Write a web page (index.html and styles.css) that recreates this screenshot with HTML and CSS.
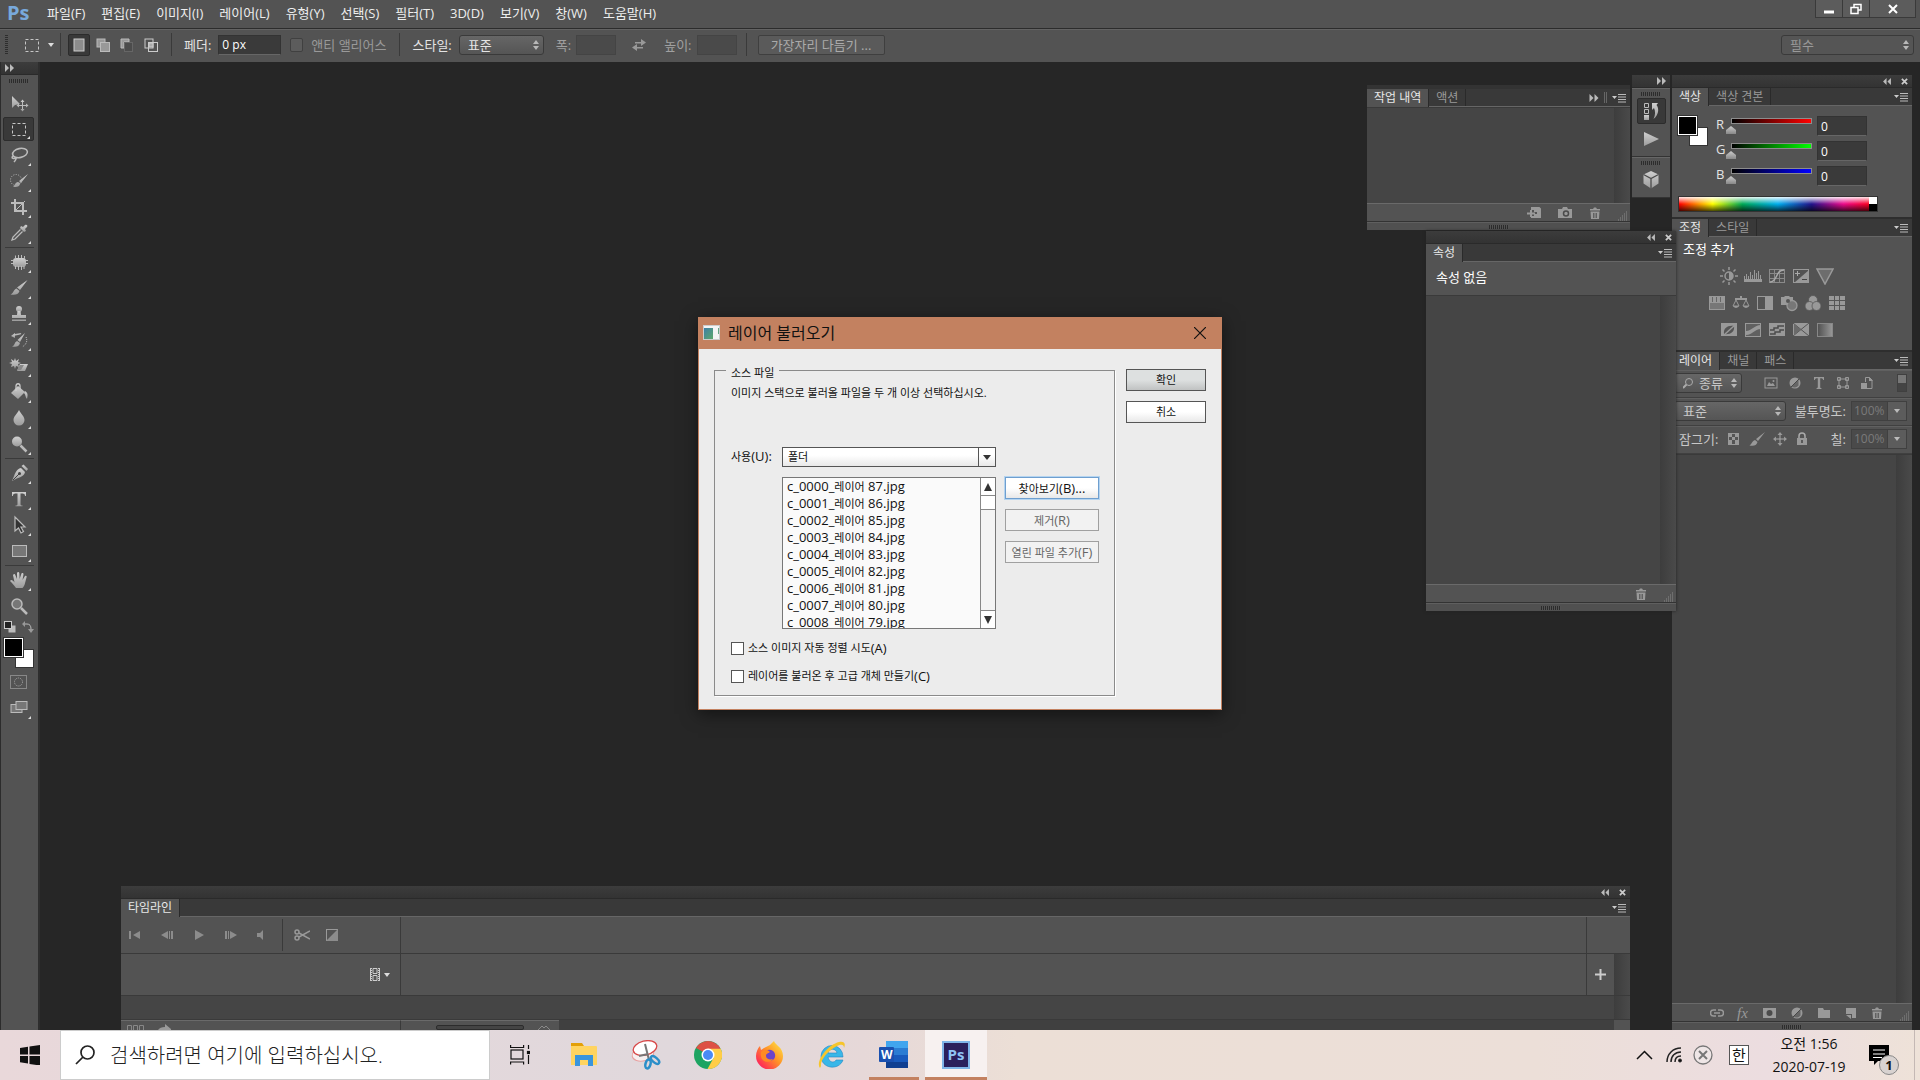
FILE: index.html
```html
<!DOCTYPE html>
<html lang="ko">
<head>
    <meta charset="UTF-8">
    <meta name="viewport" content="width=device-width, initial-scale=1.0">
    <title>Photoshop</title>
    <link rel="stylesheet" href="styles.css">
</head>
<body>
    <!-- 공용 아이콘 -->
    <svg class="sprite" aria-hidden="true">
        <defs>
            <linearGradient id="metal" x1="0" y1="0" x2="0" y2="1">
                <stop offset="0" stop-color="#d0d0d0"/><stop offset="1" stop-color="#9c9c9c"/>
            </linearGradient>
        </defs>
        <symbol id="i-menu" viewBox="0 0 14 10"><path d="M0 3h5L2.500 6z" fill="#ccc"/><path d="M6 1.500h8M6 4h8M6 6.500h8M6 9h8" stroke="#bbb"/></symbol>
        <symbol id="i-next" viewBox="0 0 9 8"><path d="M0 0l4 4-4 4zM5 0l4 4-4 4z"/></symbol>
        <symbol id="i-prev" viewBox="0 0 9 8"><path d="M4 0L0 4l4 4zM9 0L5 4l4 4z"/></symbol>
        <symbol id="i-x" viewBox="0 0 8 8"><path d="M1 1l6 6M7 1L1 7" stroke="#ccc" stroke-width="2"/></symbol>
        <symbol id="i-down" viewBox="0 0 6 4"><path d="M0 0h6L3 4z"/></symbol>
        <symbol id="i-updown" viewBox="0 0 6 10"><path d="M0 4h6L3 0zM0 6h6L3 10z"/></symbol>
        <symbol id="i-trash" viewBox="0 0 12 12"><path d="M1 2h3l1-1.500h2L8 2h3v1.500H1zM1.500 4.500h9L10 12H2z"/><path d="M4.500 6v5M6 6v5M7.500 6v5" stroke="#535353" stroke-width=".8"/></symbol>
        <symbol id="i-corner" viewBox="0 0 10 10"><path d="M8 1h1M6 3h1M8 3h1M4 5h1M6 5h1M8 5h1M2 7h1M4 7h1M6 7h1M8 7h1M0 9h1M2 9h1M4 9h1M6 9h1M8 9h1" stroke="#8a8a8a"/></symbol>
        <symbol id="i-marquee" viewBox="0 0 20 20"><rect x="3.500" y="4.500" width="13" height="12" fill="none" stroke="#c6c6c6" stroke-dasharray="3 2"/></symbol>
        <symbol id="i-half" viewBox="0 0 14 14"><circle cx="7" cy="7" r="5.500"/><path d="M3.500 10.500l7-7v6a5 5 0 0 1-7 1z" fill="#666"/><path d="M3 11l8-8" stroke="#484848"/></symbol>
    </svg>

    <header class="menubar">
        <span class="ps-logo">Ps</span>
        <nav class="menus">
            <a href="#">파일(F)</a>
            <a href="#">편집(E)</a>
            <a href="#">이미지(I)</a>
            <a href="#">레이어(L)</a>
            <a href="#">유형(Y)</a>
            <a href="#">선택(S)</a>
            <a href="#">필터(T)</a>
            <a href="#">3D(D)</a>
            <a href="#">보기(V)</a>
            <a href="#">창(W)</a>
            <a href="#">도움말(H)</a>
        </nav>
        <div class="window-buttons">
            <button aria-label="최소화"><svg width="12" height="12"><path d="M1 9h10" stroke="#fff" stroke-width="3"/></svg></button>
            <button aria-label="복원"><svg width="12" height="12" fill="none" stroke="#fff" stroke-width="1.500"><path d="M4 4V1.500h7V7H8"/><rect x="1" y="4.500" width="7" height="6"/></svg></button>
            <button class="wide" aria-label="닫기"><svg width="12" height="12"><path d="M2 2l8 8M10 2l-8 8" stroke="#fff" stroke-width="2"/></svg></button>
        </div>
    </header>

    <div class="options">
        <span class="grip-v"></span>
        <button class="opt-tool" aria-label="선택 윤곽"><svg width="20" height="20"><use href="#i-marquee"/></svg></button>
        <svg class="opt-arrow" width="6" height="4" fill="#ddd"><use href="#i-down"/></svg>
        <span class="sep"></span>
        <div class="modes">
            <button class="active" aria-label="새 선택"><svg width="14" height="14"><rect x="2" y="1" width="10" height="12" fill="#8c8c8c" stroke="#ccc"/></svg></button>
            <button aria-label="추가"><svg width="14" height="14"><rect x="1" y="1" width="8" height="8" fill="#999" stroke="#bbb"/><rect x="4.500" y="4.500" width="9" height="9" fill="#999" stroke="#bbb"/></svg></button>
            <button aria-label="빼기"><svg width="14" height="14"><path d="M1 1h8v3H4v6H1z" fill="#999" stroke="#bbb"/><rect x="4.500" y="4.500" width="8" height="9" fill="#4c4c4c" stroke="#666"/></svg></button>
            <button aria-label="교차"><svg width="14" height="14" fill="none" stroke="#ccc"><rect x="1" y="1" width="8" height="9"/><rect x="4.500" y="4.500" width="9" height="9"/><rect x="5" y="5" width="4" height="4" fill="#aaa"/></svg></button>
        </div>
        <span class="sep"></span>
        <label class="opt-label" for="feather">페더:</label>
        <input class="field feather" id="feather" type="text" value="0 px">
        <label class="anti"><input type="checkbox" disabled>앤티 앨리어스</label>
        <span class="sep"></span>
        <label class="opt-label" for="style">스타일:</label>
        <span class="drop style-drop">
            <select id="style"><option>표준</option></select>
            <svg width="6" height="10"><use href="#i-updown"/></svg>
        </span>
        <label class="opt-label dim" for="w">폭:</label>
        <input class="field small" id="w" type="text" disabled>
        <svg class="swap" width="16" height="14" fill="#999"><path d="M4 4h6V1l5 3.500L10 8V5.500H4zM12 9H6V6L1 9.500 6 13v-2.500h6z"/></svg>
        <label class="opt-label dim h-label" for="h">높이:</label>
        <input class="field small" id="h" type="text" disabled>
        <span class="sep"></span>
        <button class="refine" disabled>가장자리 다듬기 ...</button>
        <span class="drop workspace-drop">
            <select aria-label="작업 영역" disabled><option>필수</option></select>
            <svg width="6" height="10"><use href="#i-updown"/></svg>
        </span>
    </div>

    <main class="workspace">
        <aside class="tools">
            <div class="panel-head left"><svg width="9" height="8" fill="#bbb"><use href="#i-next"/></svg></div>
            <div class="grip-row"><span class="grip"></span></div>
            <button class="tool no-more" aria-label="이동"><svg width="20" height="20"><path d="M3 3v12l3-3 5-1z"/><path d="M13.500 7v11M8 12.500h11" stroke="#bbb"/><path d="M11.500 9l2-2.500 2 2.500zM11.500 16l2 2.500 2-2.500zM10 10.500l-2.500 2 2.500 2zM17 10.500l2.500 2-2.500 2z"/></svg></button>
            <button class="tool active" aria-label="사각형 선택 윤곽"><svg width="20" height="20"><use href="#i-marquee"/></svg></button>
            <button class="tool" aria-label="올가미"><svg width="20" height="20" fill="none" stroke="#bbb" stroke-width="1.600"><ellipse cx="11" cy="8" rx="7.500" ry="4.500" transform="rotate(-12 11 8)"/><path d="M4 11c-2 2 0 3 2 2s1 2-1 4"/></svg></button>
            <button class="tool" aria-label="빠른 선택"><svg width="20" height="20"><circle cx="7" cy="9" r="5.500" fill="none" stroke="#bbb" stroke-dasharray="1 1.500"/><path d="M19 3l-7 9-2-2zM11 12c0 4-3 4-7 4 2-1 2-5 5-5z"/></svg></button>
            <button class="tool" aria-label="자르기"><svg width="20" height="20" fill="none" stroke="#bbb" stroke-width="2"><path d="M6 2v12h12M2 6h12v12"/><path d="M7 13l9-9" stroke-width="1"/></svg></button>
            <button class="tool" aria-label="스포이드"><svg width="20" height="20"><path d="M12 3l2 1 2-2c2-1 3 1 2 2l-2 2 1 2-2 1-4-4z"/><path d="M11.500 6.500L4 14l-1 3 3-1 7.500-7.500" fill="none" stroke="#bbb" stroke-width="1.300"/></svg></button>
            <span class="tool-sep"></span>
            <button class="tool" aria-label="복구 브러시"><svg width="20" height="20"><rect x="4" y="6" width="13" height="9" rx="3"/><path d="M6.500 3.500v3M9.500 3v3M12.500 3v3M15.500 4v3M6.500 14v3M9.500 14v4M12.500 14v4M15 14v3M2 8.500h3M2 11.500h3M16 8.500h3M16 11.500h3" stroke="#bbb"/></svg></button>
            <button class="tool" aria-label="브러시"><svg width="20" height="20"><path d="M18.500 2L11 12l-3-2.500zM7.500 10.500l3 2.500c-1 4-5 4-9 3.500 3-1 3-5 6-6z"/></svg></button>
            <button class="tool" aria-label="복제 도장"><svg width="20" height="20"><circle cx="10" cy="5" r="3"/><path d="M8.500 7h3l.5 4h5v3H3v-3h5zM3 15.500h14V17H3z"/></svg></button>
            <button class="tool" aria-label="작업 내역 브러시"><svg width="20" height="20"><path d="M16 3l-5 9-2.500-2zM8 11l3 2c-1 4-4 4-8 3.500 3-1 2-4 5-5.500z"/><path d="M4 6c3-3 6-1 8-2.500" stroke="#bbb" stroke-width="1.500" fill="none"/><path d="M2 6l4-3v5z"/><path d="M17 7c2 4 0 8-4 10" fill="none" stroke="#bbb" stroke-dasharray="1 1"/></svg></button>
            <button class="tool" aria-label="지우개"><svg width="20" height="20"><path d="M6 2l1 3 3-2-1 3 3 1-3 1 1 3-3-1-1 3-1-3-3 1 1-3-3-1 3-1-1-3 3 2z"/><path d="M11 8h8l-3 7H8z"/><path d="M11 9l-3 5h4l3-5z" fill="#888"/></svg></button>
            <button class="tool" aria-label="페인트 통"><svg width="20" height="20"><path d="M9 4l7 6-7 7-7-6z"/><path d="M7 9V4c0-3 4-3 4 0v3" fill="none" stroke="#ccc" stroke-width="1.300"/><path d="M16 9c3 2 3 4 2 8-2-2-1-4-3-6z"/></svg></button>
            <button class="tool" aria-label="흐림 효과"><svg width="20" height="20"><path d="M10 2c2 4 5.500 6.500 5.500 10a5.500 5.500 0 0 1-11 0C4.500 8.500 8 6 10 2z"/></svg></button>
            <button class="tool" aria-label="닷지"><svg width="20" height="20"><circle cx="8" cy="7.500" r="5"/><path d="M11.500 11.500l6 6" stroke="#bbb" stroke-width="2.500"/></svg></button>
            <span class="tool-sep"></span>
            <button class="tool" aria-label="펜"><svg width="20" height="20"><path d="M12 5l4 4c-1 5-6 5-13 9 3-7 4-12 9-13z"/><path d="M12.500 3l2-1.500 4.500 4.500-1.500 2z"/><path d="M4 17l6-6" stroke="#444"/><circle cx="10.500" cy="10.500" r="1.500" fill="#444"/></svg></button>
            <button class="tool" aria-label="문자"><svg width="20" height="20"><path d="M3 3h14v4h-1c0-2-1-2.500-4.500-2.500V15c0 1 .5 1.500 2 1.500v.8h-7v-.8c1.500 0 2-.5 2-1.500V4.500C5 4.500 4 5 4 7H3z"/></svg></button>
            <button class="tool" aria-label="패스 선택"><svg width="20" height="20"><path d="M6 2v14l3.500-3 2.500 5 2.500-1.500L12 12h4z" fill="#333" stroke="#bbb" stroke-width="1.200"/></svg></button>
            <button class="tool" aria-label="사각형"><svg width="20" height="20"><rect x="3.500" y="4.500" width="14" height="11" fill="#777" stroke="#bbb"/></svg></button>
            <span class="tool-sep"></span>
            <button class="tool" aria-label="손"><svg width="20" height="20"><path d="M7 18c-2-3-4-5-6-7 1-2 3-1 4.500 1.500L4 5c1-1.500 2-1 2.300 0L8 9V3c.5-1.500 2-1.500 2.300 0l.3 6L12.500 3.500c1-1 2-.3 2 .8L13.500 10l2.500-4c1.500-.8 2 .3 1.500 1.500-1.500 5-1.500 8-4 10.500z"/></svg></button>
            <button class="tool no-more" aria-label="돋보기"><svg width="20" height="20"><circle cx="8" cy="8" r="5" fill="#777" stroke="#bbb" stroke-width="1.500"/><path d="M12 12l6 6" stroke="#bbb" stroke-width="2.500"/></svg></button>
            <div class="mini-row">
                <svg width="12" height="12"><rect x="4.500" y="4.500" width="7" height="7" fill="#bbb"/><rect x=".5" y=".5" width="7" height="7" fill="#222" stroke="#ccc"/></svg>
                <svg width="12" height="12"><path d="M2 3h3q4 0 4 5" fill="none" stroke="#bbb"/><path d="M3 0v6L0 3zM6 8h6l-3 4z"/></svg>
            </div>
            <div class="swatches"><span class="bg"></span><span class="fg"></span></div>
            <button class="tool mask no-more" aria-label="퀵 마스크"><svg width="18" height="14"><rect x=".5" y=".5" width="16" height="13" fill="none" stroke="#888"/><circle cx="8.500" cy="7" r="4" fill="none" stroke="#aaa" stroke-dasharray="1 1"/></svg></button>
            <button class="tool" aria-label="화면 모드"><svg width="20" height="20"><rect x="2" y="6.500" width="11" height="8" fill="#777" stroke="#bbb"/><rect x="7" y="3.500" width="11" height="8" fill="#777" stroke="#bbb"/></svg></button>
        </aside>

        <div class="canvas"></div>

        <!-- 아이콘 도크 -->
        <aside class="icon-dock">
            <div class="panel-head"><svg width="9" height="8" fill="#bbb"><use href="#i-next"/></svg></div>
            <div class="dock-group">
                <span class="grip"></span>
                <button class="active" aria-label="작업 내역"><svg width="18" height="18"><path d="M2.500 1.500h4v4h-4zM2.500 7.500h4v4h-4z" fill="none" stroke="#bbb"/><rect x="2" y="13" width="5" height="5"/><path d="M10 1h6L14.500 3c3 4 2 10-3 14 2-4 2-8 .5-11L10 8z"/></svg></button>
                <button aria-label="액션"><svg width="18" height="18"><path d="M2 2l15 7-15 7z"/></svg></button>
            </div>
            <div class="dock-group">
                <span class="grip"></span>
                <button aria-label="3D"><svg width="18" height="18"><path d="M9 0l7.500 3.500v9L9 17.500l-7.500-5v-9z"/><path d="M1.500 3.500L9 7.500l7.500-4M9 7.500v10" fill="none" stroke="#4b4b4b" stroke-width="1.300"/></svg></button>
            </div>
        </aside>

        <!-- 오른쪽 패널 -->
        <aside class="dock">
            <div class="panel-head"><svg width="8" height="7" fill="#bbb"><use href="#i-prev"/></svg><svg width="7" height="7"><use href="#i-x"/></svg></div>
            <section class="panel">
                <div class="tabs"><button class="tab on">색상</button><button class="tab">색상 견본</button><svg class="tab-menu" width="14" height="10"><use href="#i-menu"/></svg></div>
                <div class="color-body">
                    <div class="color-top">
                        <div class="swatches color-swatches"><span class="bg"></span><span class="fg"></span></div>
                        <div class="sliders">
                            <label for="r">R</label><input class="range red" type="range" min="0" max="255" value="0" aria-label="R"><input class="field" id="r" type="text" value="0">
                            <label for="g">G</label><input class="range green" type="range" min="0" max="255" value="0" aria-label="G"><input class="field" id="g" type="text" value="0">
                            <label for="b">B</label><input class="range blue" type="range" min="0" max="255" value="0" aria-label="B"><input class="field" id="b" type="text" value="0">
                        </div>
                    </div>
                    <div class="spectrum"><span></span></div>
                </div>
            </section>
            <section class="panel">
                <div class="tabs"><button class="tab on">조정</button><button class="tab">스타일</button><svg class="tab-menu" width="14" height="10"><use href="#i-menu"/></svg></div>
                <div class="adjust">
                    <p>조정 추가</p>
                    <div class="adjust-row">
                        <svg width="18" height="18"><circle cx="9" cy="9" r="4" fill="none" stroke="#999" stroke-width="1.500"/><path d="M9 5v8a4 4 0 0 0 0-8z"/><path d="M9 0v3M9 15v3M0 9h3M15 9h3M2.500 2.500l2 2M13.500 13.500l2 2M15.500 2.500l-2 2M2.500 15.500l2-2" stroke="#999" stroke-width="1.500"/></svg>
                        <svg width="18" height="18"><path d="M0 12h18v3H0z"/><path d="M.5 12V9M2.500 12V7M4.500 12V9M6.500 12V5M8.500 12V8M10.500 12V3M12.500 12V6M14.500 12V4M16.500 12V8" stroke="#999"/></svg>
                        <svg width="18" height="18" fill="none" stroke="#8a8a8a"><rect x="1.500" y="2.500" width="15" height="13"/><path d="M6.500 2v14M11.500 2v14M1 6.500h16M1 11.500h16"/><path d="M2 15c8 0 5-12 14-12" stroke="#aaa" stroke-width="1.500"/></svg>
                        <svg width="18" height="18"><rect x="1.500" y="2.500" width="15" height="13" fill="none" stroke="#999"/><path d="M17 3v13H2z"/><path d="M3 6.500h5M5.500 4v5" stroke="#aaa"/><path d="M10 12.500h5" stroke="#444"/></svg>
                        <svg width="18" height="18"><path d="M1 2h16L9 17z" fill="#6d6d6d" stroke="#999" stroke-width="1.500"/></svg>
                    </div>
                    <div class="adjust-row long">
                        <svg width="18" height="18"><rect x="1.500" y="2.500" width="15" height="13" fill="#777" stroke="#999"/><path d="M1 3h16v6H1z"/><path d="M4.500 3v5M8.500 3v5M12.500 3v5" stroke="#666"/></svg>
                        <svg width="18" height="18"><path d="M3 5h12M9 2v4" stroke="#999" stroke-width="2"/><path d="M4 6l-3 6h6zM14 6l-3 6h6z" fill="none" stroke="#999"/><path d="M1 12h6q-3 4-6 0zM11 12h6q-3 4-6 0z"/></svg>
                        <svg width="18" height="18"><rect x="1.500" y="2.500" width="15" height="13" fill="none" stroke="#999"/><path d="M9 3h8v13H9z"/></svg>
                        <svg width="18" height="18"><path d="M1 3h3l1-1h4l1 1h3v8H1z"/><circle cx="12" cy="11.500" r="5" fill="#777" stroke="#999" stroke-width="1.300"/><circle cx="8" cy="7" r="2" fill="#555"/></svg>
                        <svg width="18" height="18" stroke="#555" stroke-width=".8"><circle cx="9" cy="6" r="4.500"/><circle cx="5.500" cy="12" r="4.500"/><circle cx="12.500" cy="12" r="4.500"/></svg>
                        <svg width="18" height="18"><rect x="1" y="2" width="16" height="14"/><path d="M6.500 2v14M11.500 2v14M1 6.500h16M1 11.500h16" stroke="#555"/></svg>
                    </div>
                    <div class="adjust-row">
                        <svg width="18" height="18"><rect x="1" y="2" width="16" height="13"/><path d="M4 13c-1-6 4-9 10-8 1 6-4 9-10 8z" fill="#555"/><path d="M4 14L15 4" stroke="#999" stroke-width="1.500"/></svg>
                        <svg width="18" height="18"><rect x="1.500" y="2.500" width="15" height="13" fill="#606060" stroke="#999"/><path d="M2 10c6 0 8-6 15-6v4c-7 0-8 6-15 6z"/></svg>
                        <svg width="18" height="18"><rect x="1" y="2" width="16" height="13"/><path d="M2 9h4V7h4V5h6M2 13h5v-2h5V9h4" fill="none" stroke="#4b4b4b" stroke-width="1.500"/></svg>
                        <svg width="18" height="18"><rect x="1" y="2" width="16" height="13"/><path d="M1 2l8 6.500L17 2M1 15l8-6.500 8 6.500" fill="none" stroke="#555"/><path d="M2 3l7 5.500L2 14z" fill="#6a6a6a"/></svg>
                        <svg width="18" height="18"><defs><linearGradient id="fade"><stop stop-color="#505050"/><stop offset="1" stop-color="#999"/></linearGradient></defs><rect x="1.500" y="2.500" width="15" height="13" fill="url(#fade)" stroke="#888"/></svg>
                    </div>
                </div>
            </section>
            <section class="panel layers">
                <div class="tabs"><button class="tab on">레이어</button><button class="tab">채널</button><button class="tab">패스</button><svg class="tab-menu" width="14" height="10"><use href="#i-menu"/></svg></div>
                <div class="layer-row">
                    <span class="drop kind"><svg class="lens" width="10" height="11" stroke="#aaa"><circle cx="6" cy="4" r="3.500"/><path d="M3.500 6.500L0 10" stroke-width="2"/></svg><select aria-label="종류"><option>종류</option></select><svg width="6" height="10"><use href="#i-updown"/></svg></span>
                    <div class="filters">
                        <svg width="14" height="14"><rect x="1" y="2" width="12" height="10" fill="none" stroke="#999"/><path d="M3 10l2-4 2 2 2-1 2 3z"/><circle cx="9.500" cy="5" r="1"/></svg>
                        <svg width="14" height="14"><use href="#i-half"/></svg>
                        <svg width="14" height="14"><path d="M2 1h10v3h-.8C11 2.500 10 2.200 8.200 2.200V11c0 1 .3 1 1.300 1.200v.8h-5v-.8C5.500 12 5.800 12 5.800 11V2.200C4 2.200 3 2.500 2.800 4H2z"/></svg>
                        <svg width="14" height="14" fill="none" stroke="#999"><rect x="3" y="3" width="8" height="8"/><path d="M1.500 1.500h3v3h-3zM9.500 1.500h3v3h-3zM1.500 9.500h3v3h-3zM9.500 9.500h3v3h-3z"/></svg>
                        <svg width="14" height="14"><path d="M5.500 6V1.500h4L12 4v8.500H7" fill="none" stroke="#999"/><path d="M9 1v4h4M1 7h6v6H1z"/></svg>
                    </div>
                    <span class="toggle"></span>
                </div>
                <div class="layer-row">
                    <span class="drop blend"><select aria-label="혼합 모드"><option>표준</option></select><svg width="6" height="10"><use href="#i-updown"/></svg></span>
                    <label class="push" for="opacity">불투명도:</label>
                    <span class="combo"><input id="opacity" type="text" value="100%" disabled><button aria-label="불투명도 열기"><svg width="6" height="4" fill="#bbb"><use href="#i-down"/></svg></button></span>
                </div>
                <div class="layer-row">
                    <span class="lock-label">잠그기:</span>
                    <div class="locks">
                        <svg width="14" height="14"><rect x="1.500" y="1.500" width="10" height="11" fill="#555" stroke="#999"/><path d="M2 2h3v3H2zM8 2h3v3H8zM5 5h3v3H5zM2 8h3v4H2zM8 8h3v4H8z"/></svg>
                        <svg width="16" height="14"><path d="M16 0L9 9 7 7zM6 8l2.500 2c-1 4-4 4-8 3.500C3 12 3 9 6 8z"/></svg>
                        <svg width="14" height="14"><path d="M7 1v12M1 7h12" stroke="#aaa"/><path d="M4.500 3L7 0l2.500 3zM4.500 11L7 14l2.500-3zM3 4.500L0 7l3 2.500zM11 4.500L14 7l-3 2.500z"/></svg>
                        <svg width="14" height="14"><rect x="2" y="6" width="10" height="7"/><path d="M4 6V4a3 3 0 0 1 6 0v2" fill="none" stroke="#aaa" stroke-width="1.500"/><path d="M7 8v3" stroke="#444" stroke-width="1.500"/></svg>
                    </div>
                    <label class="push" for="fill">칠:</label>
                    <span class="combo"><input id="fill" type="text" value="100%" disabled><button aria-label="칠 열기"><svg width="6" height="4" fill="#bbb"><use href="#i-down"/></svg></button></span>
                </div>
                <div class="list"></div>
                <div class="foot layer-foot">
                    <svg width="14" height="12" fill="none" stroke="#999" stroke-width="1.500"><path d="M6 3H3.500a3 3 0 0 0 0 6H6M8 3h2.500a3 3 0 0 1 0 6H8M4 6h6"/></svg>
                    <span class="fx">fx</span>
                    <svg width="14" height="12"><rect x="0" y="1" width="13" height="10"/><circle cx="6.500" cy="6" r="3" fill="#4b4b4b"/></svg>
                    <svg width="14" height="14"><use href="#i-half"/></svg>
                    <svg width="14" height="12"><path d="M1 1h5l1 2h6v8H1z"/></svg>
                    <svg width="14" height="12"><path d="M2 1h10v10H8V7H2z"/><path d="M2 8h5v4z"/></svg>
                    <svg width="12" height="12"><use href="#i-trash"/></svg>
                    <svg class="corner" width="10" height="10"><use href="#i-corner"/></svg>
                </div>
                <div class="bottom-grip"><span class="grip"></span></div>
            </section>
        </aside>

        <!-- 떠 있는 패널 -->
        <section class="float history">
            <div class="tabs"><button class="tab on">작업 내역</button><button class="tab">액션</button><svg class="tab-more" width="10" height="8" fill="#bbb"><use href="#i-next"/></svg><span class="bars"></span><svg class="tab-menu" width="14" height="10"><use href="#i-menu"/></svg></div>
            <div class="list"></div>
            <div class="foot">
                <svg width="14" height="12"><path d="M4 0h6v4h4v7H4V9h3V7h3V5H7V3H4z"/><path d="M11 0l3 3h-3zM0 6.500h8M4 3v7" stroke="#999" stroke-width="2"/></svg>
                <svg width="14" height="12"><path d="M0 2h4l1-2h4l1 2h4v9H0z"/><circle cx="8" cy="6.500" r="2.500" fill="#999" stroke="#4b4b4b" stroke-width="1.500"/></svg>
                <svg width="12" height="12"><use href="#i-trash"/></svg>
                <svg class="corner" width="10" height="10"><use href="#i-corner"/></svg>
            </div>
            <div class="bottom-grip"><span class="grip"></span></div>
        </section>

        <section class="float props">
            <div class="panel-head"><svg width="8" height="7" fill="#bbb"><use href="#i-prev"/></svg><svg width="7" height="7"><use href="#i-x"/></svg></div>
            <div class="tabs"><button class="tab on">속성</button><svg class="tab-menu" width="14" height="10"><use href="#i-menu"/></svg></div>
            <p class="props-empty">속성 없음</p>
            <div class="list"></div>
            <div class="foot">
                <svg width="12" height="12"><use href="#i-trash"/></svg>
                <svg class="corner" width="10" height="10"><use href="#i-corner"/></svg>
            </div>
            <div class="bottom-grip"><span class="grip"></span></div>
        </section>

        <section class="float timeline">
            <div class="panel-head"><svg width="8" height="7" fill="#bbb"><use href="#i-prev"/></svg><svg width="7" height="7"><use href="#i-x"/></svg></div>
            <div class="tabs"><button class="tab on">타임라인</button><svg class="tab-menu" width="14" height="10"><use href="#i-menu"/></svg></div>
            <div class="tl-row controls">
                <div class="tl-left">
                    <button aria-label="처음"><svg width="12" height="10"><path d="M0 1h2v8H0zM11 1v8L4 5z"/></svg></button>
                    <button aria-label="이전 프레임"><svg width="12" height="10"><path d="M7 1v8L0 5zM8 1h1v8H8zM10 1h2v8h-2z"/></svg></button>
                    <button aria-label="재생"><svg width="12" height="10"><path d="M2 0l9 5-9 5z"/></svg></button>
                    <button aria-label="다음 프레임"><svg width="12" height="10"><path d="M0 1h2v8H0zM3 1h1v8H3zM5 1v8l7-4z"/></svg></button>
                    <button aria-label="소리"><svg width="12" height="10"><path d="M0 3h3l3-3v10L3 7H0z"/></svg></button>
                    <span class="tl-sep"></span>
                    <button aria-label="분할"><svg width="16" height="12" fill="none" stroke="#999" stroke-width="1.500"><circle cx="3" cy="3" r="2"/><circle cx="3" cy="9" r="2"/><path d="M5 4l11 6M5 8l11-6"/></svg></button>
                    <button aria-label="전환"><svg width="12" height="12"><rect x=".5" y=".5" width="11" height="11" fill="none" stroke="#999"/><path d="M12 0v12H0z"/></svg></button>
                </div>
                <div class="tl-track"></div>
                <div class="tl-end"></div>
            </div>
            <div class="tl-row media">
                <div class="tl-left"><svg width="10" height="13"><path d="M.5 0v13M9.500 0v13M3 .5h4v5H3zM3 7.500h4v5H3z" fill="none" stroke="#ccc"/><path d="M1.500 0v13M8.500 0v13" stroke="#ccc" stroke-dasharray="1 1"/></svg><svg width="6" height="4" fill="#ddd"><use href="#i-down"/></svg></div>
                <div class="tl-track"></div>
                <button class="add" aria-label="미디어 추가"><svg width="11" height="11"><path d="M5.500 0v11M0 5.500h11" stroke="#ccc" stroke-width="2"/></svg></button>
                <div class="tl-scroll"></div>
            </div>
            <div class="tl-row empty"><div></div><div class="tl-scroll"></div></div>
            <div class="tl-row tl-foot">
                <div class="tl-left"><svg width="18" height="5"><path d="M.5 5V.5h4V5M6.500 5V.5h4V5M12.500 5V.5h4V5" fill="none" stroke="#888"/></svg><svg width="13" height="6"><path d="M0 6q2-3 7-3V0l6 5v1z"/></svg></div>
                <div class="zoom"><span></span><svg width="12" height="5" fill="none" stroke="#888"><path d="M0 5l4-4 2 2 2-2 4 4"/></svg></div>
                <div class="tl-corner"></div>
            </div>
        </section>

        <!-- 대화 상자 -->
        <form class="dialog" onsubmit="return false">
            <div class="dialog-title">
                <svg width="18" height="16"><defs><linearGradient id="app" x1="0" y1="0" x2="1" y2="1"><stop stop-color="#3d7fa8"/><stop offset="1" stop-color="#5ea86a"/></linearGradient></defs><rect x=".5" y=".5" width="16" height="14" fill="#f4f4f4" stroke="#ccc"/><rect x="1" y="3" width="9" height="11" fill="url(#app)"/><path d="M15.500 3v6" stroke="#69a684"/></svg>
                <h1>레이어 불러오기</h1>
                <button type="button" aria-label="닫기"><svg width="12" height="12"><path d="M0 0l12 12M12 0L0 12" stroke="#111" stroke-width="1.200"/></svg></button>
            </div>
            <div class="dialog-body">
                <fieldset>
                    <legend>소스 파일</legend>
                    <p>이미지 스택으로 불러올 파일을 두 개 이상 선택하십시오.</p>
                    <div class="source">
                        <label class="use-label" for="use">사용<b>(U):</b></label>
                        <span class="use-drop"><select id="use"><option>폴더</option></select><svg width="8" height="5"><path d="M0 0h8L4 5z" fill="#333"/></svg></span>
                        <div class="files">
                            <ul role="listbox" aria-label="파일">
                                <li role="option">c_0000_<span>레이어</span> 87.jpg</li>
                                <li role="option">c_0001_<span>레이어</span> 86.jpg</li>
                                <li role="option">c_0002_<span>레이어</span> 85.jpg</li>
                                <li role="option">c_0003_<span>레이어</span> 84.jpg</li>
                                <li role="option">c_0004_<span>레이어</span> 83.jpg</li>
                                <li role="option">c_0005_<span>레이어</span> 82.jpg</li>
                                <li role="option">c_0006_<span>레이어</span> 81.jpg</li>
                                <li role="option">c_0007_<span>레이어</span> 80.jpg</li>
                                <li role="option">c_0008_<span>레이어</span> 79.jpg</li>
                            </ul>
                            <div class="scrollbar">
                                <button type="button" aria-label="위로"><svg width="8" height="8"><path d="M4 0l4 8H0z" fill="#333"/></svg></button>
                                <span class="thumb"></span>
                                <button type="button" class="down" aria-label="아래로"><svg width="8" height="8"><path d="M0 0h8L4 8z" fill="#333"/></svg></button>
                            </div>
                        </div>
                        <div class="side">
                            <button type="button" class="btn focus">찾아보기<b>(B)...</b></button>
                            <button type="button" class="btn" disabled>제거<b>(R)</b></button>
                            <button type="button" class="btn" disabled>열린 파일 추가<b>(F)</b></button>
                        </div>
                    </div>
                    <label class="check first"><input type="checkbox">소스 이미지 자동 정렬 시도<b>(A)</b></label>
                    <label class="check"><input type="checkbox">레이어를 불러온 후 고급 개체 만들기<b>(C)</b></label>
                </fieldset>
                <div class="confirm">
                    <button type="submit" class="btn primary">확인</button>
                    <button type="button" class="btn">취소</button>
                </div>
            </div>
        </form>
    </main>

    <footer class="taskbar">
        <button class="start" aria-label="시작"><svg width="20" height="20"><path d="M0 3l8-1.200V9.500H0zM9.500 1.500L20 0v9.500H9.500zM0 11h8v7.500L0 17.200zM9.500 11H20v9.500L9.500 19z" fill="#111"/></svg></button>
        <label class="search">
            <svg width="22" height="22" fill="none" stroke="#222" stroke-width="1.700"><circle cx="13.500" cy="8.500" r="6.500"/><path d="M9 13l-7 7"/></svg>
            <input type="text" placeholder="검색하려면 여기에 입력하십시오." aria-label="검색">
        </label>
        <button class="task task-view" aria-label="작업 보기"><svg width="20" height="20" fill="none" stroke="#111" stroke-width="1.200"><rect x="1" y="5" width="12" height="9"/><path d="M.6 0v2.500h13V0M.6 19.500V17h13v2.500M18.500 0v4M18.500 10v9"/><rect x="17.500" y="6.500" width="2" height="2" fill="#111"/></svg></button>
        <button class="task" aria-label="파일 탐색기"><svg width="28" height="24"><path d="M1 0h11l2 3v4H1z" fill="#e3a008"/><path d="M1 3h25a1 1 0 0 1 1 1v18H1z" fill="#ffd460"/><path d="M5 23V12h18v11h-5v-6h-8v6z" fill="#3a95dc"/></svg></button>
        <button class="task" aria-label="캡처 도구"><svg width="30" height="30"><ellipse cx="12" cy="14" rx="11" ry="7" fill="#f6efef" stroke="#e8a0a0" transform="rotate(-12 12 14)"/><ellipse cx="14" cy="8" rx="12" ry="7" fill="#fff" stroke="#d84848" stroke-width="1.300" transform="rotate(-14 14 8)"/><path d="M14 4l4 16M8 16l9-2" stroke="#777" stroke-width="2"/><g fill="none" stroke="#2c8fc9" stroke-width="2.500"><ellipse cx="17" cy="24" rx="2.500" ry="4.500" transform="rotate(15 17 24)"/><ellipse cx="24" cy="20" rx="2.500" ry="5" transform="rotate(-50 24 20)"/></g></svg></button>
        <button class="task" aria-label="크롬"><svg width="28" height="28" viewBox="0 0 28 28"><circle cx="14" cy="14" r="14" fill="#1da462"/><path d="M14 14L1.900 7A14 14 0 0 1 26.100 7z" fill="#dd5144"/><path d="M2 7l6 10 6-3z" fill="#1da462"/><path d="M14 7.500h12.500A14 14 0 0 1 13.500 28l6-11z" fill="#ffcd46"/><path d="M14 7.500h12.300L24 4 8 6z" fill="#dd5144"/><circle cx="14" cy="14" r="6.500" fill="#fff"/><circle cx="14" cy="14" r="5" fill="#4a8af4"/></svg></button>
        <button class="task" aria-label="파이어폭스"><svg width="28" height="28"><defs><linearGradient id="ff" x1="1" y1="0" x2="0" y2="1"><stop stop-color="#fff04a"/><stop offset=".45" stop-color="#ff9326"/><stop offset=".8" stop-color="#ff3750"/><stop offset="1" stop-color="#e31587"/></linearGradient></defs><path d="M14 4l4-4c1 4 9 6 9 15a13.500 13.500 0 0 1-27 0C0 11 2 7 4 5l1 4 3-2z" fill="url(#ff)"/><path d="M8 13c1-5 9-6 11 0 1 5-3 7-6 7-3-1-5-3-5-7z" fill="#6d44c9"/><path d="M5 11c3-3 6-3 9 0-2 2-4 1-4 4s4 4 7 3c-5 6-14 2-12-7z" fill="#ff8a24"/></svg></button>
        <button class="task" aria-label="인터넷 익스플로러"><svg width="30" height="30"><path d="M4 16a11 11 0 1 1 22 1H11c1 6 7 6 8 3h7c-4 11-22 9-22-4zm7-3h9c-1-5-8-5-9 0z" fill="#39b7e8" stroke="#2187c4" stroke-width=".6"/><path d="M3 28C-2 22 10 5 22 2c5-1 7 1 5 6 0-4-3-4-7-2C10 11 3 21 4 26z" fill="#f6c52b"/></svg></button>
        <button class="task open" aria-label="워드"><svg width="30" height="28"><path d="M7 0h22v7H7z" fill="#41a5ee"/><path d="M7 7h22v7H7z" fill="#2b7cd3"/><path d="M7 14h22v7H7z" fill="#185abd"/><path d="M7 21h22v6H7z" fill="#103f91"/><rect y="6" width="15" height="15" rx="1" fill="#1a50b0"/><text x="2" y="18" class="word-w">W</text></svg></button>
        <button class="task current" aria-label="포토샵"><span class="ps-tile">Ps</span></button>
        <div class="tray">
            <svg class="up" width="17" height="10"><path d="M1 9l7.500-7.500L16 9" fill="none" stroke="#111" stroke-width="1.500"/></svg>
            <svg class="wifi" width="17" height="16" fill="none" stroke="#222"><path d="M1 15C1 7 7 1 15 1M5 15c0-6 4-10 10-10M9 15c0-4 2-6 6-6" stroke-width="1.500"/><circle cx="14" cy="13.500" r="1.500" fill="#111"/></svg>
            <svg class="blocked" width="20" height="20" fill="none" stroke="#777"><circle cx="10" cy="10" r="9" fill="#eee6e6" stroke-width="1.300"/><path d="M6 6l8 8M14 6l-8 8" stroke-width="2"/></svg>
            <span class="ime">한</span>
            <div class="clock"><span>오전 1:56</span><span>2020-07-19</span></div>
            <button class="notice" aria-label="알림"><svg width="30" height="30"><path d="M0 0h20v16H9l-4 4v-4H0z" fill="#000"/><path d="M4 5h12M4 9h12M4 12.500h9" stroke="#fff"/></svg><span>1</span></button>
        </div>
    </footer>
</body>
</html>
```
FILE: styles.css
```css
* {
    box-sizing: border-box;
}
body {
    margin: 0;
    height: 100vh;
    display: flex;
    flex-direction: column;
    overflow: hidden;
    background: #262626;
    color: #e4e4e4;
    font-family: "Open Sans", "Noto Sans CJK KR", sans-serif;
    font-size: 13px;
    line-height: 18px;
}
button, input, select {
    font: inherit;
    color: inherit;
    margin: 0;
    padding: 0;
    border: none;
    background: none;
    border-radius: 0;
}
select {
    appearance: none;
}
p, h1, ul {
    margin: 0;
    padding: 0;
}
svg {
    display: block;
    flex: none;
}
svg:not([fill]) {
    fill: #999;
}
.sprite {
    position: absolute;
    width: 0;
    height: 0;
}

/* 메뉴 */
.menubar {
    display: flex;
    flex: none;
    height: 29px;
    padding-left: 7px;
    background: #535353;
    border-bottom: 1px solid #2c2c2c;
}
.ps-logo {
    width: 32px;
    color: #78a9dc;
    font-size: 20px;
    font-weight: bold;
    line-height: 26px;
}
.menus {
    display: flex;
}
.menus a {
    padding: 0 8px;
    color: #eee;
    line-height: 27px;
    text-decoration: none;
}
.window-buttons {
    display: flex;
    height: 18px;
    margin-left: auto;
    margin-right: 4px;
    border: 1px solid #3a3a3a;
    border-top: none;
    background: #5c5c5c;
}
.window-buttons button {
    display: flex;
    align-items: center;
    justify-content: center;
    width: 27px;
    border-right: 1px solid #3a3a3a;
}
.window-buttons .wide {
    width: 45px;
    border: none;
}

/* 옵션 막대 */
.options {
    display: flex;
    flex: none;
    align-items: center;
    height: 33px;
    padding: 0 6px 3px 5px;
    background: #535353;
    border-top: 1px solid #636363;
}
.grip-v {
    width: 3px;
    height: 20px;
    background: repeating-linear-gradient(#2e2e2e 0 1px, #535353 1px 2px);
}
.opt-tool {
    margin-left: 14px;
}
.opt-arrow {
    margin: 0 6px;
}
.sep {
    flex: none;
    width: 1px;
    height: 23px;
    background: #3a3a3a;
}
.modes {
    display: flex;
    gap: 2px;
    padding: 0 9px 0 7px;
}
.modes button {
    display: flex;
    align-items: center;
    justify-content: center;
    width: 22px;
    height: 22px;
    border-radius: 2px;
}
.modes .active {
    background: #393939;
    border: 1px solid #2c2c2c;
}
.opt-label {
    padding: 0 7px 0 12px;
    white-space: nowrap;
}
.dim {
    padding-right: 5px;
    color: #a0a0a0;
}
.field {
    height: 20px;
    padding: 0 3px;
    background: #3a3a3a;
    border: 1px solid #333;
    border-bottom-color: #666;
    font-size: 12px;
    color: #fff;
}
.field:disabled {
    background: #4a4a4a;
    border-color: #444;
}
.feather {
    width: 63px;
}
.small {
    width: 40px;
}
.anti {
    display: flex;
    align-items: center;
    gap: 8px;
    padding: 0 13px 0 9px;
    color: #999;
}
.anti input {
    appearance: none;
    width: 13px;
    height: 14px;
    background: #5c5c5c;
    border: 1px solid #404040;
    border-radius: 2px;
}
.drop {
    position: relative;
    display: block;
}
.drop select {
    display: block;
    width: 100%;
    height: 20px;
    padding: 0 8px;
    background: linear-gradient(#666, #555);
    border: 1px solid #3a3a3a;
    border-radius: 3px;
    line-height: 16px;
}
.drop svg {
    position: absolute;
    top: 5px;
    right: 5px;
    fill: #b8b8b8;
}
.style-drop {
    width: 85px;
}
.swap {
    margin: 0 5px 0 15px;
}
.refine {
    width: 127px;
    height: 20px;
    margin-left: 11px;
    background: #5a5a5a;
    border: 1px solid #3f3f3f;
    border-radius: 2px;
    color: #aaa;
    line-height: 16px;
}
.small + .sep {
    margin-left: 9px;
}
.workspace-drop {
    width: 133px;
    margin-left: auto;
}
.workspace-drop select {
    background: #555;
    color: #999;
    opacity: 1;
}

/* 작업 영역 */
.workspace {
    position: relative;
    display: flex;
    flex: 1;
    min-height: 0;
    padding-right: 8px;
    background: #262626;
}
.canvas {
    flex: 1;
}
.tools {
    display: flex;
    flex-direction: column;
    width: 40px;
    background: #535353;
    border-left: 1px solid #2c2c2c;
    border-right: 2px solid #2e2e2e;
}
.panel-head {
    display: flex;
    flex: none;
    align-items: center;
    justify-content: flex-end;
    gap: 10px;
    height: 13px;
    padding-right: 4px;
    background: linear-gradient(#3c3c3c, #333);
    border-bottom: 1px solid #2a2a2a;
}
.panel-head.left {
    justify-content: flex-start;
    padding-left: 4px;
}
.grip {
    display: block;
    width: 20px;
    height: 4px;
    background: repeating-linear-gradient(90deg, #2c2c2c 0 1px, #535353 1px 2px);
}
.grip-row {
    height: 15px;
    padding: 4px 8px;
}
.tool {
    position: relative;
    display: flex;
    flex: none;
    align-items: center;
    justify-content: center;
    width: 31px;
    height: 24px;
    margin: 1px 2px;
    border-radius: 2px;
}
.tool svg:not([fill]), .icon-dock svg:not([fill]) {
    fill: url(#metal);
}
.tool.active {
    background: #393939;
    border: 1px solid #2c2c2c;
}
.tool::after {
    content: "";
    position: absolute;
    right: 3px;
    bottom: 1px;
    border-left: 3px solid transparent;
    border-bottom: 3px solid #ddd;
}
.no-more::after {
    display: none;
}
.tool-sep {
    height: 1px;
    margin: 1px 4px;
    background: #3a3a3a;
}
.mini-row {
    display: flex;
    gap: 6px;
    padding: 2px 3px 5px;
}
.swatches {
    position: relative;
    height: 30px;
    width: 30px;
    margin: 0 3px;
}
.swatches span {
    position: absolute;
    width: 19px;
    height: 19px;
    border: 1px solid #333;
}
.swatches .fg {
    top: 0;
    left: 0;
    background: #000;
    border: 1px solid #fff;
    outline: 1px solid #333;
}
.swatches .bg {
    right: 0;
    bottom: 0;
    background: #fff;
}
.tool.mask {
    margin-top: 2px;
}

/* 탭 */
.tabs {
    display: flex;
    flex: none;
    align-items: stretch;
    height: 18px;
    padding-right: 4px;
    background: #393939;
    border-bottom: 1px solid #666;
    font-size: 12px;
}
.tab {
    height: 17px;
    padding: 0 7px;
    border-right: 1px solid #2a2a2a;
    color: #999;
    line-height: 16px;
    white-space: nowrap;
}
.tab.on {
    height: 18px;
    background: #535353;
    color: #e8e8e8;
}
.tab-menu {
    align-self: center;
    margin-left: auto;
}
.tab-more {
    align-self: center;
    margin-left: auto;
}
.bars {
    width: 3px;
    height: 11px;
    margin: 3px 5px 0;
    border: 1px solid #666;
    border-width: 0 1px;
}
.bars + .tab-menu {
    margin-left: 0;
}
.list {
    flex: 1;
    min-height: 0;
    background: linear-gradient(90deg, #3d3d3d, #4a4a4a) right / 16px 100% no-repeat #454545;
    border-top: 1px solid #3a3a3a;
}
.foot {
    display: flex;
    flex: none;
    align-items: center;
    justify-content: flex-end;
    gap: 17px;
    height: 19px;
    padding-right: 2px;
    background: #535353;
    border-top: 1px solid #6a6a6a;
    border-bottom: 1px solid #333;
}
.corner {
    align-self: flex-end;
}
.bottom-grip {
    display: flex;
    flex: none;
    justify-content: center;
    height: 8px;
    padding-top: 2px;
    background: #505050;
    border-top: 1px solid #5f5f5f;
}

/* 도크 */
.icon-dock {
    width: 38px;
    margin-top: 13px;
    margin-right: 2px;
}
.dock-group {
    display: flex;
    flex-direction: column;
    align-items: center;
    gap: 2px;
    padding: 3px 0 4px;
    background: #535353;
    border-bottom: 1px solid #333;
    border-top: 1px solid #666;
}
.dock-group button {
    display: flex;
    align-items: center;
    justify-content: center;
    width: 29px;
    height: 26px;
    border-radius: 2px;
}
.dock-group .active {
    background: #393939;
    border: 1px solid #2c2c2c;
}
.dock {
    display: flex;
    flex-direction: column;
    width: 240px;
    margin-top: 13px;
}
.panel {
    background: #535353;
    border-bottom: 2px solid #2e2e2e;
}
.color-body {
    height: 111px;
    padding: 10px 6px 0;
}
.color-top {
    display: flex;
}
.color-swatches {
    margin: 0 8px 0 0;
}
.sliders {
    display: grid;
    grid-template-columns: 10px 91px 50px;
    row-gap: 5px;
    align-items: start;
}
.sliders label {
    line-height: 16px;
}
.range {
    appearance: none;
    width: 91px;
    height: 18px;
    margin-top: 2px;
    background: linear-gradient(90deg, #000, var(--end)) 6px 1px / 79px 4px no-repeat,
        linear-gradient(#8c8c8c, #8c8c8c) 5px 0 / 81px 6px no-repeat;
}
.range::-webkit-slider-thumb {
    appearance: none;
    width: 10px;
    height: 8px;
    margin-top: 6px;
    background: linear-gradient(#ccc, #888);
    clip-path: polygon(50% 0, 100% 50%, 100% 100%, 0 100%, 0 50%);
}
.red {
    --end: #f00;
}
.green {
    --end: #0f0;
}
.blue {
    --end: #00f;
}
.spectrum {
    display: flex;
    justify-content: flex-end;
    width: 200px;
    height: 16px;
    margin-top: 10px;
    border: 1px solid #333;
    background: linear-gradient(rgba(255, 255, 255, .9), transparent 50%, rgba(0, 0, 0, .7)),
        linear-gradient(90deg, #f00, #ff0 17%, #0a5 32%, #00aeef 50%, #22148c 67%, #ec0a8c 83%, #f00);
}
.spectrum span {
    width: 8px;
    background: linear-gradient(#fff 50%, #000 50%);
}
.adjust {
    height: 113px;
}
.adjust p {
    height: 25px;
    padding: 3px 11px 0;
    color: #fff;
}
.adjust-row {
    display: flex;
    align-items: center;
    gap: 6px;
    height: 27px;
    padding-left: 48px;
}
.adjust-row.long {
    padding-left: 36px;
}
.layers {
    display: flex;
    flex: 1;
    flex-direction: column;
    min-height: 0;
    border-bottom: none;
}
.layer-row {
    display: flex;
    flex: none;
    align-items: center;
    height: 28px;
    padding: 0 5px 3px 2px;
    border-top: 1px solid #606060;
    border-bottom: 1px solid #404040;
    color: #c8c8c8;
}
.kind {
    width: 68px;
}
.kind select {
    padding-left: 24px;
}
.drop .lens {
    left: 9px;
    fill: none;
}
.filters {
    display: flex;
    gap: 10px;
    margin-left: 22px;
}
.toggle {
    width: 10px;
    height: 18px;
    margin-left: auto;
    background: linear-gradient(#777 50%, #444 50%);
    border: 1px solid #404040;
}
.blend {
    width: 112px;
}
.push {
    margin-left: auto;
    padding-right: 5px;
}
.combo {
    display: flex;
    width: 56px;
    height: 20px;
    background: #4a4a4a;
    border: 1px solid #404040;
}
.combo input {
    width: 35px;
    padding-left: 2px;
    font-size: 12px;
    color: #7a7a7a;
}
.combo button {
    display: flex;
    flex: 1;
    align-items: center;
    justify-content: center;
    background: #5c5c5c;
    border-left: 1px solid #404040;
}
.lock-label {
    padding-left: 5px;
}
.locks {
    display: flex;
    gap: 8px;
    margin-left: 9px;
}
.layer-foot {
    gap: 13px;
}
.layer-foot .corner {
    margin-left: 4px;
}
.fx {
    width: 13px;
    color: #999;
    font-family: "Liberation Serif", serif;
    font-size: 15px;
    font-style: italic;
}

/* 떠 있는 패널 */
.float {
    position: absolute;
    display: flex;
    flex-direction: column;
    background: #535353;
}
.history {
    top: 23px;
    right: 290px;
    width: 263px;
    height: 145px;
    border-top: 4px solid #333;
}
.props {
    top: 169px;
    right: 244px;
    width: 250px;
    height: 380px;
    box-shadow: 0 0 3px #222;
}
.props-empty {
    height: 33px;
    padding: 6px 10px;
    color: #fff;
}
.timeline {
    left: 121px;
    right: 290px;
    bottom: 0;
    height: 144px;
}
.tl-row {
    display: flex;
    flex: none;
    height: 37px;
    border-bottom: 1px solid #3a3a3a;
}
.tl-left {
    display: flex;
    align-items: center;
    width: 280px;
    border-right: 1px solid #3a3a3a;
}
.controls .tl-left {
    padding-left: 8px;
    gap: 18px;
}
.controls button {
    width: 14px;
}
.controls button svg:not([fill]) {
    fill: #8c8c8c;
}
.tl-sep {
    width: 1px;
    height: 32px;
    margin: 0 -7px;
    background: #3a3a3a;
}
.tl-track {
    flex: 1;
}
.tl-end {
    width: 44px;
    border-left: 1px solid #3a3a3a;
}
.media {
    height: 42px;
}
.media .tl-left {
    justify-content: flex-end;
    gap: 4px;
    padding-right: 10px;
}
.add {
    display: flex;
    align-items: center;
    justify-content: center;
    width: 28px;
    border-left: 1px solid #3a3a3a;
}
.tl-scroll {
    width: 16px;
    background: linear-gradient(90deg, #3d3d3d, #4a4a4a);
}
.empty {
    justify-content: space-between;
    height: 24px;
    background: #454545;
}
.tl-foot {
    flex: 1;
    background: #404040;
    border: none;
    overflow: hidden;
}
.tl-foot .tl-left {
    align-items: flex-end;
    gap: 13px;
    padding: 0 6px;
    background: #535353;
    border-top: 1px solid #6a6a6a;
}
.zoom {
    display: flex;
    align-items: flex-end;
    gap: 14px;
    width: 158px;
    padding-left: 35px;
    background: #535353;
    border-top: 1px solid #6a6a6a;
}
.zoom span {
    width: 88px;
    height: 5px;
    background: #444;
    border: 1px solid #2c2c2c;
    border-radius: 2px;
}
.tl-corner {
    width: 16px;
    margin-left: auto;
    background: #535353;
}

/* 대화 상자 */
.dialog {
    position: absolute;
    top: 255px;
    left: 50%;
    width: 524px;
    transform: translateX(-50%);
    background: #ececec;
    border: 1px solid #c38160;
    box-shadow: 0 4px 16px rgba(0, 0, 0, .5);
    color: #111;
    font-size: 11px;
}
.dialog b {
    font-size: 13px;
    font-weight: normal;
}
.dialog-title {
    display: flex;
    align-items: center;
    height: 31px;
    padding: 0 15px 1px 4px;
    background: #c38160;
}
.dialog-title h1 {
    padding-left: 7px;
    font-size: 16px;
    font-weight: normal;
}
.dialog-title button {
    margin-left: auto;
}
.dialog-body {
    display: flex;
    gap: 11px;
    padding: 15px 15px 13px;
}
fieldset {
    width: 402px;
    margin: 0;
    padding: 0 0 5px 16px;
    border: 1px solid #8a8a8a;
    box-shadow: 1px 1px #fff;
}
legend {
    height: 12px;
    margin-left: -5px;
    padding: 0 5px;
    background: #ececec;
}
fieldset p {
    padding: 8px 0 45px;
}
.source {
    display: grid;
    grid-template-columns: 42px 214px 94px;
    gap: 10px 9px;
    align-items: start;
}
.use-label {
    white-space: nowrap;
}
.use-drop {
    position: relative;
    grid-column: 2 / 4;
    width: 214px;
}
.use-drop select {
    display: block;
    width: 100%;
    height: 20px;
    padding: 0 5px;
    background: linear-gradient(90deg, transparent 195px, #555 195px 196px, transparent 196px), linear-gradient(#fff 40%, #e8e8e8);
    border: 1px solid #555;
}
.use-drop svg {
    position: absolute;
    top: 8px;
    right: 5px;
}
.files {
    grid-column: 2;
    display: flex;
    height: 152px;
    background: #fafafa;
    border: 1px solid #777;
    overflow: hidden;
}
.files ul {
    flex: 1;
    padding-left: 4px;
    list-style: none;
    font-size: 13px;
    line-height: 17px;
}
.files li {
    height: 17px;
}
.files li span {
    font-size: 11px;
}
.scrollbar {
    display: flex;
    flex-direction: column;
    width: 15px;
    background: #f4f4f4;
    border-left: 1px solid #888;
}
.scrollbar button {
    display: flex;
    align-items: center;
    justify-content: center;
    height: 18px;
    background: #fff;
    border-bottom: 1px solid #888;
}
.thumb {
    height: 14px;
    background: #fff;
    border-bottom: 1px solid #888;
}
.scrollbar .down {
    margin-top: auto;
    border-top: 1px solid #888;
    border-bottom: none;
}
.side, .confirm {
    display: flex;
    flex-direction: column;
    gap: 10px;
}
.btn {
    height: 22px;
    background: linear-gradient(#fff 50%, #e8e8e8);
    border: 1px solid #555;
    line-height: 18px;
    white-space: nowrap;
}
.btn:disabled {
    border-color: #a0a0a0;
    background: #f2f2f2;
    color: #666;
}
.btn.focus {
    border-color: #6f9fcf;
    outline: 1px solid #b4d4f0;
}
.btn.primary {
    background: linear-gradient(#dde0e0 50%, #c0c2c2);
}
.confirm {
    width: 80px;
    padding-top: 5px;
}
.check {
    display: flex;
    align-items: center;
    height: 28px;
}
.check.first {
    margin-top: 5px;
}
.check input {
    appearance: none;
    width: 13px;
    height: 13px;
    margin-right: 4px;
    background: #fff;
    border: 1px solid #555;
}

/* 작업 표시줄 */
.taskbar {
    display: flex;
    flex: none;
    height: 50px;
    background: linear-gradient(90deg, #e9d8da, #e0d8dc 35%, #e6d8d8 45%, #ecdfd6 53%, #ecdfd8 80%, #ecdde0 92%, #eee2d8);
    color: #111;
}
.start {
    display: flex;
    align-items: center;
    justify-content: center;
    width: 60px;
}
.search {
    display: flex;
    align-items: center;
    gap: 14px;
    width: 430px;
    padding-left: 13px;
    background: #fff;
    border: 1px solid #ccc;
}
.search input {
    flex: 1;
    font-size: 20px;
    font-weight: 300;
    outline: none;
}
.search input::placeholder {
    color: #222;
}
.task {
    position: relative;
    display: flex;
    align-items: center;
    justify-content: center;
    width: 62px;
}
.task-view {
    width: 60px;
    margin-right: 3px;
}
.task.open::after, .task.current::after {
    content: "";
    position: absolute;
    right: 6px;
    bottom: 0;
    left: 6px;
    height: 3px;
    background: #c38160;
}
.task.current {
    background: #f7f1f0;
}
.task.current::after {
    right: 0;
    left: 0;
}
.word-w {
    fill: #fff;
    font-size: 12px;
    font-weight: bold;
}
.ps-tile {
    width: 28px;
    height: 28px;
    background: #2a1f5c;
    border: 2px solid #7fb4e8;
    color: #8fc4f4;
    font-size: 15px;
    font-weight: bold;
    line-height: 23px;
}
.tray {
    display: flex;
    align-items: center;
    margin-left: auto;
    margin-right: 5px;
    padding-right: 15px;
    border-right: 1px solid #c4b8b4;
}
.up {
    margin-right: 13px;
}
.wifi {
    margin-right: 10px;
}
.blocked {
    margin-right: 16px;
}
.ime {
    width: 20px;
    height: 20px;
    background: #fff;
    border: 1px solid #555;
    font-size: 15px;
    line-height: 18px;
    text-align: center;
}
.clock {
    display: flex;
    flex-direction: column;
    width: 76px;
    margin: 0 22px;
    font-size: 14px;
    line-height: 23px;
    text-align: center;
    white-space: nowrap;
}
.notice {
    position: relative;
    width: 30px;
    height: 30px;
}
.notice svg {
    margin-top: 5px;
}
.notice span {
    position: absolute;
    right: 0;
    bottom: -5px;
    width: 20px;
    height: 20px;
    background: #d8d2d0;
    border: 1px solid #888;
    border-radius: 50%;
    font-size: 13px;
    font-weight: bold;
    line-height: 18px;
}
```
